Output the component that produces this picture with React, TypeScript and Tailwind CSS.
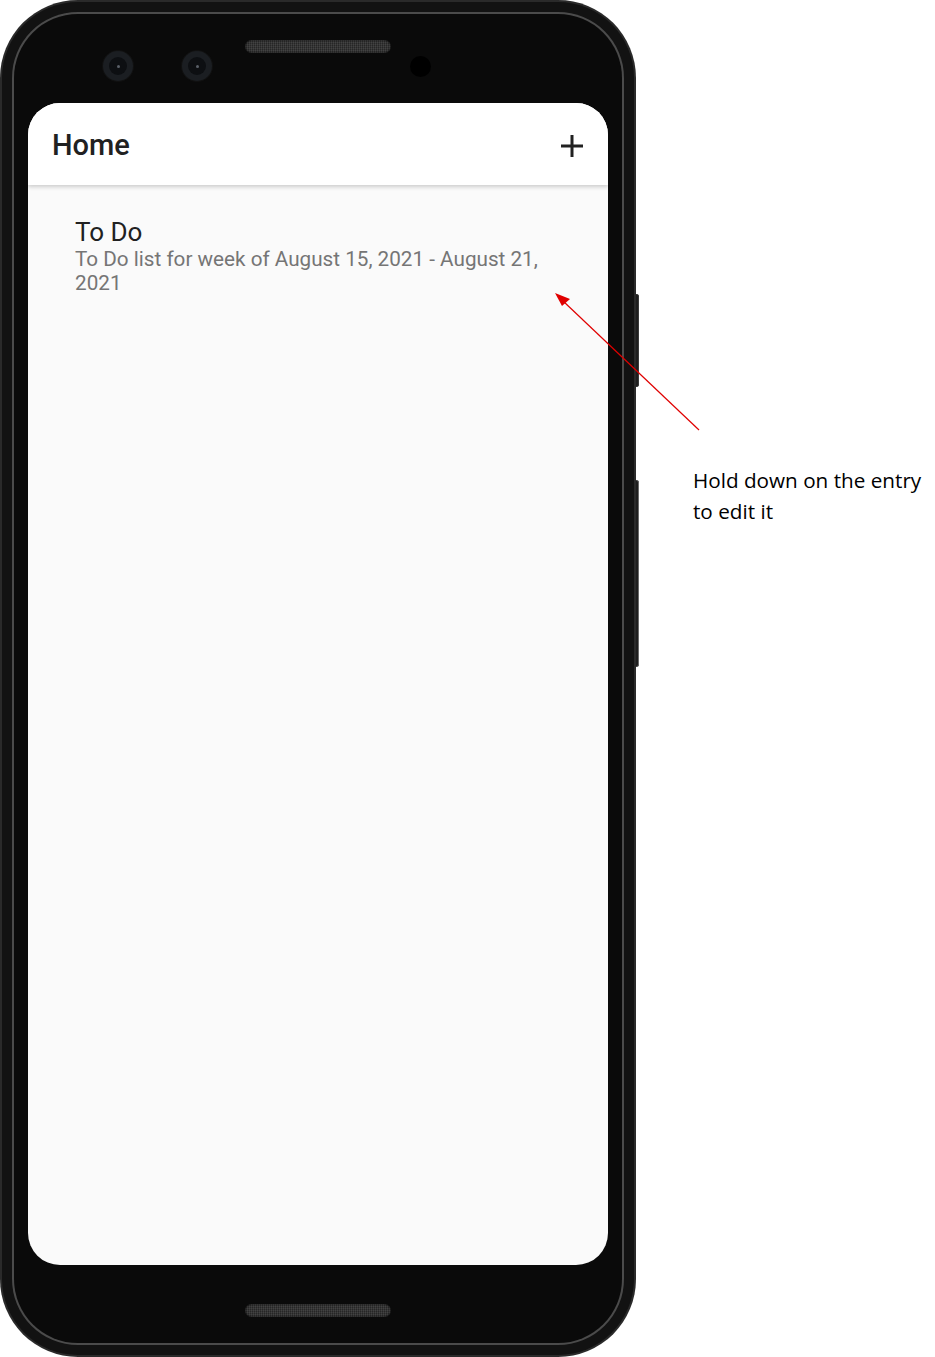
import React from "react";

const speakerStyle: React.CSSProperties = {
  backgroundImage:
    "repeating-linear-gradient(90deg, rgba(255,255,255,0.08) 0 1px, transparent 1px 2px), repeating-linear-gradient(0deg, rgba(255,255,255,0.06) 0 1px, transparent 1px 2px)",
};

function Speaker({ className }: { className: string }) {
  return (
    <div
      className={`h-[13px] w-[146px] shrink-0 rounded-full bg-[#262626] shadow-[inset_0_0_2px_rgba(0,0,0,0.9)] ${className}`}
      style={speakerStyle}
    />
  );
}

function Camera({ className }: { className: string }) {
  return (
    <div
      className={`flex h-[30px] w-[30px] shrink-0 items-center justify-center rounded-full bg-[#1b1e22] shadow-[0_0_0_1px_#111] ${className}`}
    >
      <div className="flex h-[18px] w-[18px] items-center justify-center rounded-full bg-[#0d0f12]">
        <div className="h-[3px] w-[3px] rounded-full bg-[#5a6068]" />
      </div>
    </div>
  );
}

export default function App() {
  return (
    <div
      className="relative flex h-[1357px] w-[935px] overflow-hidden bg-white"
      style={{ fontFamily: "Roboto, 'Noto Sans', sans-serif" }}
    >
      {/* phone */}
      <div className="relative h-[1357px] w-[636px] shrink-0">
        {/* side buttons */}
        <div className="absolute left-[632px] top-[294px] h-[93px] w-[7px] rounded-r-[3px] bg-[#1e1e1e] shadow-[inset_-1px_0_0_#3a3a3a]" />
        <div className="absolute left-[632px] top-[480px] h-[187px] w-[7px] rounded-r-[3px] bg-[#1e1e1e] shadow-[inset_-1px_0_0_#6a6a6a]" />

        <div className="relative h-full w-full rounded-[78px] bg-[#2a2a2a] p-[2px]">
          <div className="h-full w-full rounded-[76px] bg-[#121212] p-[10px]">
            <div className="h-full w-full rounded-[66px] bg-[#4b4b4b] p-[2px]">
              <div className="flex h-full w-full flex-col rounded-[64px] bg-[#0a0a0a] px-[14px]">
                {/* top bezel */}
                <div className="flex h-[89px] shrink-0 items-start pl-[75px]">
                  <Camera className="mt-[37px]" />
                  <Camera className="ml-[49px] mt-[37px]" />
                  <Speaker className="ml-[33px] mt-[26px]" />
                  <div className="ml-[19px] mt-[42px] h-[21px] w-[21px] shrink-0 rounded-full bg-black" />
                </div>

                {/* screen */}
                <div className="flex flex-1 flex-col overflow-hidden rounded-[32px] bg-[#fafafa]">
                  <div className="relative z-10 flex h-[82px] shrink-0 items-center justify-between bg-white pl-[24px] pr-[24px] pt-[3px] shadow-[0_2px_4px_rgba(0,0,0,0.18)]">
                    <span className="text-[29px] font-medium leading-none text-[#212121]">Home</span>
                    <svg width="24" height="24" viewBox="0 0 24 24">
                      <path d="M12 1v22M1 12h22" stroke="#212121" strokeWidth="3" />
                    </svg>
                  </div>
                  <div className="pl-[47px] pr-[45px] pt-[32px]">
                    <div className="text-[26px] leading-[30px] text-[#212121]">To Do</div>
                    <div className="text-[20.7px] leading-[24px] text-[#757575]">
                      To Do list for week of August 15, 2021 - August 21, 2021
                    </div>
                  </div>
                </div>

                {/* bottom bezel */}
                <div className="flex h-[78px] shrink-0 justify-center pt-[39px]">
                  <Speaker className="" />
                </div>
              </div>
            </div>
          </div>
        </div>
      </div>

      {/* annotation arrow */}
      <svg className="absolute left-0 top-0" width="935" height="1357" viewBox="0 0 935 1357">
        <line x1="699" y1="430" x2="563" y2="301" stroke="#e00000" strokeWidth="1.2" />
        <polygon points="555,293 570,299 562,306" fill="#e00000" />
      </svg>

      <div
        className="ml-[57px] mt-[465px] text-[20.7px] leading-[31px] text-black"
        style={{ fontFamily: "'Open Sans', 'Noto Sans', sans-serif" }}
      >
        Hold down on the entry
        <br />
        to edit it
      </div>
    </div>
  );
}
